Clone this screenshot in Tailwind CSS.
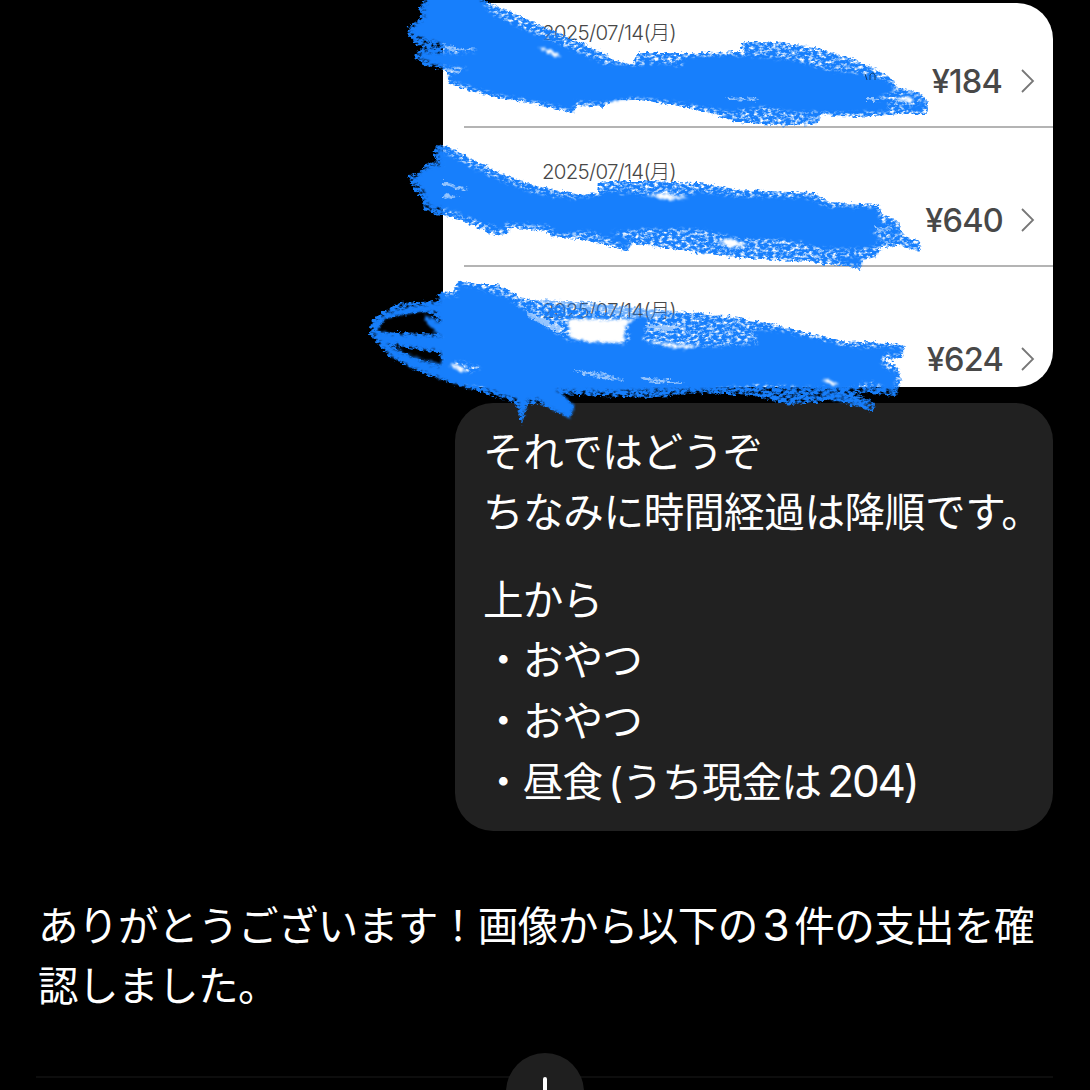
<!DOCTYPE html>
<html lang="ja">
<head>
<meta charset="utf-8">
<title>Chat</title>
<script src="https://cdn.jsdelivr.net/npm/@tailwindcss/browser@4"></script>
</head>
<body class="bg-black">
<main class="relative flex h-[1090px] w-[1090px] flex-col overflow-hidden bg-black pl-[38px] pr-[37px] pt-[3px] font-[Inter,'Noto_Sans_CJK_JP',sans-serif] text-white">

  <!-- attached receipt list -->
  <section class="h-[384px] w-[610px] shrink-0 self-end overflow-hidden rounded-[36px] bg-white text-[#484848]">
    <div class="ml-[21px] flex h-[125px] items-start justify-between border-b-2 border-[#b4b4b4] pl-[78px] pr-[18px]">
      <p class="mt-[15px] text-[20.5px] font-light leading-[30px] tracking-[-0.75px]">2025/07/14(月)</p>
      <p class="mt-[59px] flex items-center gap-[17px] text-[32.5px] font-[450] leading-[40px] tracking-[-0.8px]">¥184<svg class="h-[26px] w-[16px]" viewBox="0 0 16 26" fill="none" stroke="#777" stroke-width="1.8"><path d="M3 1 14 12 3 23"/></svg></p>
    </div>
    <div class="ml-[21px] flex h-[139px] items-start justify-between border-b-2 border-[#b4b4b4] pl-[78px] pr-[18px]">
      <p class="mt-[29px] text-[20.5px] font-light leading-[30px] tracking-[-0.75px]">2025/07/14(月)</p>
      <p class="mt-[73px] flex items-center gap-[16px] text-[32.5px] font-[450] leading-[40px] tracking-[-0.8px]">¥640<svg class="h-[26px] w-[16px]" viewBox="0 0 16 26" fill="none" stroke="#777" stroke-width="1.8"><path d="M3 1 14 12 3 23"/></svg></p>
    </div>
    <div class="ml-[21px] flex h-[139px] items-start justify-between pl-[78px] pr-[18px]">
      <p class="mt-[29px] text-[20.5px] font-light leading-[30px] tracking-[-0.75px]">2025/07/14(月)</p>
      <p class="mt-[73px] flex items-center gap-[16px] text-[32.5px] font-[450] leading-[40px] tracking-[-0.8px]">¥624<svg class="h-[26px] w-[16px]" viewBox="0 0 16 26" fill="none" stroke="#777" stroke-width="1.8"><path d="M3 1 14 12 3 23"/></svg></p>
    </div>
  </section>

  <!-- user message -->
  <section class="mt-[16px] h-[428px] w-[598px] shrink-0 self-end rounded-[38px] bg-[#212121] pl-[28px] pt-[20px] text-[40.6px] leading-[60.3px] tracking-[-0.4px] whitespace-nowrap">
    <p>それではどうぞ<br>ちなみに時間経過は降順です。</p>
    <p class="mt-[27px] leading-[60.8px] tracking-[-0.8px]">上から<br>・おやつ<br>・おやつ<br>・昼食<span class="pl-[6px]">(</span>うち現金は<span class="pl-[6px] text-[44px] leading-[1px] tracking-[-2.2px]">204)</span></p>
  </section>

  <!-- assistant reply -->
  <section class="mt-[66px] shrink-0 text-[40.6px] leading-[60px] tracking-[-0.6px] whitespace-nowrap">
    <p>ありがとうございます！画像から以下の<span class="px-[5px] text-[44px] leading-[1px]">3</span>件の支出を確<br>認しました。</p>
  </section>
  <hr class="mt-[59px] -ml-[2px] border-t-2 border-[#0d0d0d]">

  <!-- scroll-to-bottom button -->
  <div class="absolute left-[506px] top-[1053px] flex h-[78px] w-[78px] justify-center rounded-full bg-[#1f1f1f] pt-[23px]">
    <svg class="h-[34px] w-[30px]" viewBox="0 0 30 34" fill="none" stroke="#fff" stroke-width="4" stroke-linecap="round" stroke-linejoin="round"><path d="M15 3V31M4 20 15 31 26 20"/></svg>
  </div>

  <!-- crayon redactions -->
  <svg class="pointer-events-none absolute left-0 top-0" width="1090" height="440" viewBox="0 0 1090 440">
    <defs>
      <filter id="rough" filterUnits="userSpaceOnUse" x="350" y="-20" width="620" height="460" color-interpolation-filters="sRGB">
        <feTurbulence type="fractalNoise" baseFrequency="0.32" numOctaves="2" seed="4" result="n"/>
        <feDisplacementMap in="SourceGraphic" in2="n" scale="7" xChannelSelector="R" yChannelSelector="G" result="d"/>
        <feGaussianBlur in="d" stdDeviation="0.9"/>
      </filter>
      <filter id="grain" filterUnits="userSpaceOnUse" x="350" y="-20" width="620" height="460" color-interpolation-filters="sRGB">
        <feTurbulence type="fractalNoise" baseFrequency="0.22 0.36" numOctaves="4" seed="9" result="n"/>
        <feDisplacementMap in="SourceGraphic" in2="n" scale="7" xChannelSelector="R" yChannelSelector="G" result="d"/>
        <feColorMatrix in="n" type="matrix" values="0 0 0 0 0  0 0 0 0 0  0 0 0 0 0  3 0 0 0 -0.66" result="m"/>
        <feComposite in="d" in2="m" operator="in" result="c"/>
        <feGaussianBlur in="c" stdDeviation="0.7"/>
      </filter>
    </defs>

    <g fill="#177ffc" filter="url(#grain)">
      <path d="M428-4 419 6 421 18 409 26 407 34 414 42 424 48 416 51 415 58 424 65 443 70 447 72 447 83 470 91 500 98 545 106 573 113 577 106 605 107 612 100 640 100 680 106 720 116 735 122 790 126 819 123 820 115 860 117 900 114 927 114 929 104 922 94 897 87 893 80 875 69 850 58 815 48 775 42 742 42 741 52 700 53 638 53 632 65 615 60 600 51 560 34 520 16 490 4 480-4Z"/>
      <path d="M436 145 433 155 438 160 427 163 420 173 408 175 413 188 422 198 424 209 434 214 443 215 470 224 495 235 508 234 509 228 546 231 551 236 580 239 629 251 632 243 680 250 740 258 810 262 845 266 860 270 863 260 876 257 882 247 899 246 920 251 921 242 904 237 899 222 882 214 879 205 828 202 815 193 740 190 700 183 650 181 599 181 598 193 580 195 540 187 500 173 470 158 450 147Z"/>
      <path fill-rule="evenodd" d="M457 281 453 292 439 293 436 301 400 303 385 310 372 320 369 334 378 345 392 358 415 370 450 383 485 393 515 402 522 424 528 405 538 403 570 418 574 406 560 394 600 396 650 398 700 393 750 395 790 405 835 400 874 412 875 403 855 392 896 396 901 380 899 369 886 360 902 358 905 346 890 343 840 341 790 328 740 318 700 313 675 312 650 320 638 319 590 310 545 304 520 297 500 285 483 285ZM376 332 386 318 425 311 441 323 441 334 400 332ZM389 345 440 353 442 366 415 358Z"/>
      <path d="M535 300 590 302 650 309 700 313 650 322 590 312 545 308Z" opacity=".6"/>
    </g>

    <g fill="#177ffc" filter="url(#rough)">
      <path d="M432-4 424 6 426 18 414 26 411 32 424 38 442 44 449 50 475 52 444 54 422 52 421 59 440 65 466 68 450 75 449 81 500 95 545 103 572 110 577 102 605 102 640 97 690 104 730 112 760 106 790 112 850 112 888 112 888 99 872 100 893 92 890 82 868 75 830 70 790 60 750 56 700 56 680 58 684 66 650 63 640 66 605 64 560 45 520 28 490 12 478-4Z"/>
      <path d="M905 108 922 112 925 101 913 94 893 88 920 99 920 104Z"/>
      <path d="M438 149 438 158 444 165 428 168 415 178 424 190 428 205 442 208 466 216 497 228 506 231 504 223 550 226 556 234 590 231 628 247 629 240 610 232 650 229 700 229 740 239 780 239 830 249 870 248 877 243 882 240 872 232 890 231 910 241 917 245 904 239 896 228 880 222 876 208 825 206 806 197 740 197 700 192 677 197 640 195 605 191 602 195 570 199 530 192 495 178 465 164Z"/>
      <path d="M838 257 862 257 860 265 846 263Z"/>
      <path d="M459 284 457 296 441 296 440 304 408 308 388 313 375 322 374 333 382 344 390 345 440 367 443 376 418 365 450 377 500 393 519 400 523 418 527 400 538 396 569 414 571 406 548 389 600 391 660 389 710 389 760 384 800 387 845 389 870 382 892 391 897 375 880 364 884 353 902 354 901 348 850 347 800 335 755 331 757 345 700 347 655 346 640 338 630 331 627 344 590 342 568 340 550 330 525 310 505 297 484 290ZM376 332 384 319 408 313 436 310 442 323 424 315 428 325 442 337 400 335ZM388 342 441 351 442 364 415 357ZM462 361 480 368 470 373 450 363Z" fill-rule="evenodd"/>
      <path d="M382 344 400 352 420 360 446 370 480 382 470 388 440 378 412 367 390 355Z"/>
      <path d="M528 386 552 386 575 406 569 418 556 411 535 397Z"/>
      <path d="M628 320 650 316 643 340 630 344ZM757 330 790 331 800 350 757 350Z"/>
      <path d="M815 393 840 392 872 408 850 404Z" opacity=".6"/>
    </g>

    <g fill="#fff" filter="url(#rough)">
      <path d="M538 47 550 49 562 57 553 56Z"/>
      <path d="M645 195 665 193 688 198 670 200Z"/>
      <path d="M718 242 728 238 748 245 730 247Z"/>
      <path d="M568 320 580 319 634 320 625 326 624 343 590 342 571 338Z"/>
      <path d="M645 341 665 343 700 346 680 349Z"/>
      <path d="M895 98 910 97 916 101 900 102Z"/>
      <path d="M820 379 828 380 840 384 832 385Z"/>
      <path d="M448 363 456 364 468 371 460 372Z"/>
    </g>
    <g fill="#fff" opacity=".55" filter="url(#grain)">
      <path d="M443 44 462 48 478 50 450 52Z"/>
      <path d="M443 69 462 70 460 73 445 72Z"/>
      <path d="M443 181 468 189 464 191 443 185ZM443 193 462 197 443 199Z"/>
      <path d="M525 310 565 328 560 333 530 318Z"/>
      <path d="M572 370 600 372 625 380 600 379ZM640 377 670 380 685 384 650 383Z"/>
      <path d="M645 325 680 326 675 331 650 330Z"/>
      <path d="M875 227 894 227 890 231 878 231Z"/>
      <path d="M725 97 760 99 755 101 728 100ZM867 98 882 98 880 101 867 101Z"/>
    </g>
    <path d="M865 74 867 80M870 80V75Q873 71 875 75V80" fill="none" stroke="#12406f" stroke-width="1"/>
  </svg>
</main>
</body>
</html>
